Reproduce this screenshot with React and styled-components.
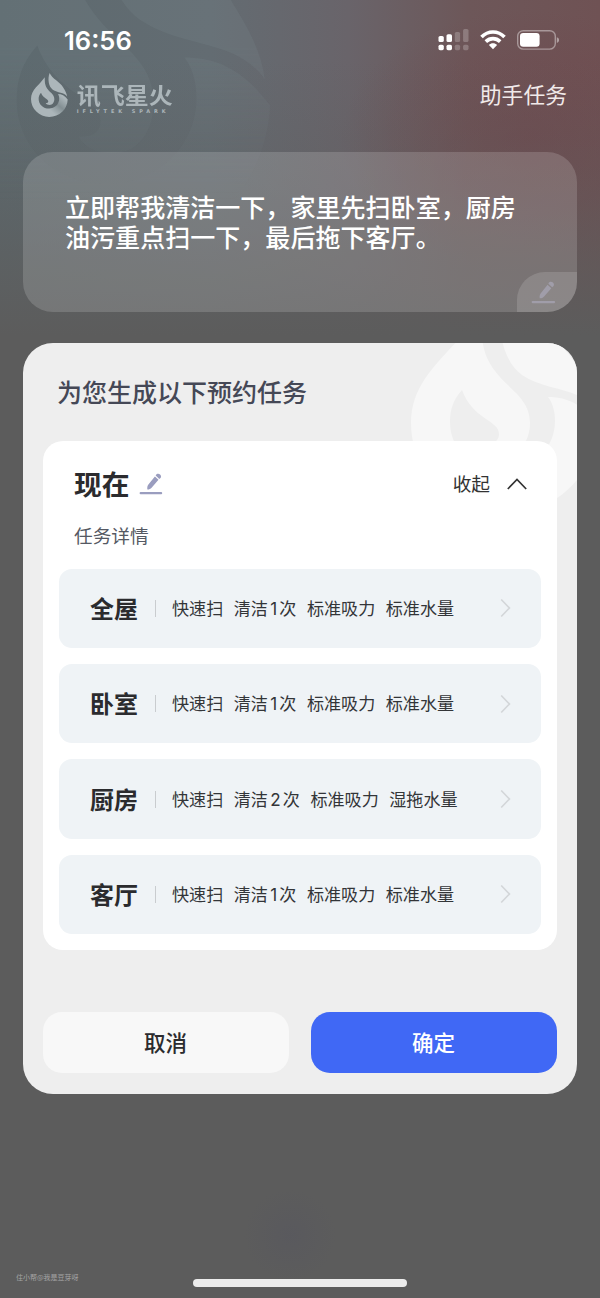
import React, { useState } from 'react'
import styled, { createGlobalStyle } from 'styled-components'

const tasks = [
	{ room: '全屋', times: 1, suction: '标准吸力', water: '标准水量' },
	{ room: '卧室', times: 1, suction: '标准吸力', water: '标准水量' },
	{ room: '厨房', times: 2, suction: '标准吸力', water: '湿拖水量' },
	{ room: '客厅', times: 1, suction: '标准吸力', water: '标准水量' },
]

function Flame({ className, shaded }) {
	return (
		<svg className={className} viewBox='0 0 187 224' fill='currentColor'>
			<defs>
				<linearGradient id='flameShade' x1='1' y1='0.3' x2='0.5' y2='1'>
					<stop offset='0' stopColor='#5a686c' stopOpacity='0' />
					<stop offset='0.5' stopColor='#5a686c' stopOpacity='0.5' />
					<stop offset='1' stopColor='#5a686c' stopOpacity='0' />
				</linearGradient>
			</defs>
			<path d='M70 22C70 52 72 65 84 81C97 99 119 108 119 133C119 150 110 163 95 163C86 163 79 160 75 153C84 154 88 150 88 144C88 130 62 130 51 100C42 110 39 120 39 132C39 160 62 181 92 181C122 181 144 158 144 131C144 120 141 112 137 107C157 107 172 115 187 135C185 184 145 224 93 224C42 224 0 183 0 133C0 85 42 63 70 22Z' />
			<path d='M95 0C108 30 148 44 165 75C175 91 182 104 184 120C168 96 136 102 111 85C90 70 83 30 95 0Z' />
			{shaded && (
				<path
					fill='url(#flameShade)'
					d='M137 107C157 107 172 115 187 135C185 184 145 224 93 224C80 210 92 190 110 178C132 168 144 150 144 131C144 120 141 112 137 107Z'
				/>
			)}
		</svg>
	)
}

function PencilIcon({ className }) {
	return (
		<svg className={className} viewBox='0 0 24 24' fill='currentColor'>
			<path d='M15.9 4.6L19.5 7.8L12.6 15.8C11.5 17.1 9.9 17.7 8.4 17.6C8 15.8 8.4 13.9 9.4 12.6Z' />
			<path d='M16.7 3.5C17.2 1.7 19.5 1.2 21.1 2.5C22.7 3.9 22.3 6 20.3 6.9Z' />
			<rect x='0.6' y='20.1' width='22.6' height='2.1' rx='1' />
		</svg>
	)
}

function StatusBar() {
	return (
		<Status>
			<Time>16:56</Time>
			<StatusIcons>
				<svg width='31' height='22' viewBox='0 0 31 22' fill='#fff'>
					<rect x='0.5' y='7' width='5.3' height='6' rx='1.6' />
					<rect x='0.5' y='15.7' width='5.3' height='5.5' rx='1.6' />
					<rect x='8.5' y='5.2' width='5.5' height='7.8' rx='1.6' />
					<rect x='8.5' y='15.7' width='5.5' height='5.5' rx='1.6' />
					<g opacity='0.22'>
						<rect x='16.8' y='3' width='5.3' height='10' rx='1.6' />
						<rect x='16.8' y='15.7' width='5.3' height='5.5' rx='1.6' />
						<rect x='25.1' y='0' width='5.4' height='13' rx='1.6' />
						<rect x='25.1' y='15.7' width='5.4' height='5.5' rx='1.6' />
					</g>
				</svg>
				<svg width='26' height='20' viewBox='0 0 26 20' fill='none' stroke='#fff' strokeWidth='3.6'>
					<path d='M1.5 7C8 0.3 18 0.3 24.5 7' />
					<path d='M5.8 11.6C10 7.6 16 7.6 20.2 11.6' />
					<path d='M8.9 15C11.2 12.7 14.8 12.7 17.1 15L13 19.3Z' fill='#fff' stroke='none' />
				</svg>
				<svg width='43' height='20' viewBox='0 0 43 20'>
					<rect x='0.7' y='0.7' width='37.6' height='18.4' rx='5.6' fill='none' stroke='#fff' strokeOpacity='0.4' strokeWidth='1.4' />
					<rect x='3' y='3' width='19.6' height='13.8' rx='3.2' fill='#fff' />
					<path d='M39.8 7.2C42.8 8 42.8 12 39.8 12.8Z' fill='#fff' fillOpacity='0.45' />
				</svg>
			</StatusIcons>
		</Status>
	)
}

function TaskRow({ room, times, suction, water }) {
	return (
		<Row>
			<Room>{room}</Room>
			<Divider />
			<Details>
				<span>快速扫</span>
				<span>
					清洁<Count>{times}</Count>次
				</span>
				<span>{suction}</span>
				<span>{water}</span>
			</Details>
			<svg width='11' height='20' viewBox='0 0 11 20' fill='none' stroke='#d3d6d9' strokeWidth='1.7'>
				<path d='M1.2 1.5L9.4 10L1.2 18.5' />
			</svg>
		</Row>
	)
}

function App() {
	const [open, setOpen] = useState(true)

	return (
		<Screen>
			<GlobalStyle />
			<BackdropFlame />
			<StatusBar />
			<Header>
				<Brand>
					<BrandFlame shaded />
					<BrandText>
						<BrandName>讯飞星火</BrandName>
						<BrandSub>IFLYTEK SPARK</BrandSub>
					</BrandText>
				</Brand>
				<HeaderLink>助手任务</HeaderLink>
			</Header>
			<Prompt>
				立即帮我清洁一下，家里先扫卧室，厨房
				<br />
				油污重点扫一下，最后拖下客厅。
				<PromptEdit>
					<PencilIcon />
				</PromptEdit>
			</Prompt>
			<Panel>
				<PanelFlame />
				<PanelTitle>为您生成以下预约任务</PanelTitle>
				<Card>
					<CardHead>
						<When>现在</When>
						<EditIcon />
						<Toggle onClick={() => setOpen(!open)}>
							{open ? '收起' : '展开'}
							<ToggleArrow $open={open} viewBox='0 0 20 12'>
								<path d='M0.8 11L10 1.5L19.2 11' />
							</ToggleArrow>
						</Toggle>
					</CardHead>
					<CardLabel>任务详情</CardLabel>
					{open && (
						<Rows>
							{tasks.map((task) => (
								<TaskRow key={task.room} {...task} />
							))}
						</Rows>
					)}
				</Card>
				<Actions>
					<ActionButton>取消</ActionButton>
					<ActionButton $primary>确定</ActionButton>
				</Actions>
			</Panel>
			<Footer>
				<Watermark>住小帮@我是豆芽呀</Watermark>
				<HomeBar />
			</Footer>
		</Screen>
	)
}

export default App

const GlobalStyle = createGlobalStyle`
	* {
		box-sizing: border-box;
	}

	body {
		margin: 0;
		background: #5c5c5c;
		font-family: 'Noto Sans CJK SC', 'Liberation Sans', sans-serif;
	}

	button {
		border: 0;
		padding: 0;
		background: none;
		font: inherit;
	}

	svg {
		display: block;
		flex: none;
	}
`

const Screen = styled.div`
	position: relative;
	display: flex;
	flex-direction: column;
	width: 600px;
	height: 1298px;
	padding: 0 23px;
	overflow: hidden;
	background:
		radial-gradient(circle at 290px 1235px, rgba(88, 88, 94, 0.7), transparent 46px),
		linear-gradient(180deg, rgba(92, 92, 92, 0) 60px, rgba(92, 92, 92, 0.35) 190px, #5c5c5c 335px),
		radial-gradient(ellipse 190px 130px at 530px 140px, rgba(110, 66, 73, 0.5), transparent),
		linear-gradient(90deg, #5d6a6f 0%, #636c72 35%, #69646a 58%, #6d5759 78%, #6f5254 100%);
`

const BackdropFlame = styled(Flame)`
	position: absolute;
	left: -50px;
	top: -126px;
	width: 320px;
	height: 384px;
	color: rgba(125, 140, 145, 0.2);
	mask-image: linear-gradient(#000 45%, transparent 85%);
`

const Status = styled.div`
	position: relative;
	display: flex;
	justify-content: space-between;
	height: 68px;
	padding: 25px 17px 0 41px;
`

const Time = styled.div`
	color: #fff;
	font-family: Inter, sans-serif;
	font-size: 25.6px;
	font-weight: 600;
	line-height: 31px;
`

const StatusIcons = styled.div`
	display: flex;
	align-items: center;
	height: 30px;
	gap: 11px;
`

const Header = styled.div`
	position: relative;
	display: flex;
	justify-content: space-between;
	height: 84px;
	padding: 5px 10px 0 8px;
`

const Brand = styled.div`
	display: flex;
	height: 44px;
	color: #acb6ba;
`

const BrandFlame = styled(Flame)`
	width: 36.7px;
	height: 44px;
`

const BrandText = styled.div`
	padding: 10px 0 0 9px;
`

const BrandName = styled.div`
	font-size: 24px;
	font-weight: 700;
	line-height: 24px;
	transform: scaleY(0.94);
`

const BrandSub = styled.div`
	width: 98px;
	margin-top: 1px;
	color: #acb6ba;
	font-family: 'DejaVu Sans', sans-serif;
	font-size: 5px;
	font-weight: 700;
	letter-spacing: 3.9px;
	line-height: 6px;
	white-space: nowrap;
`

const HeaderLink = styled.div`
	margin-top: 5px;
	color: #f1eaea;
	font-size: 21.8px;
	line-height: 32px;
`

const Prompt = styled.div`
	position: relative;
	flex: none;
	height: 160px;
	padding: 39px 42px;
	overflow: hidden;
	border-radius: 30px;
	background: rgba(255, 255, 255, 0.155);
	color: #fff;
	font-size: 25.05px;
	font-weight: 500;
	line-height: 30px;
	white-space: nowrap;
`

const PromptEdit = styled.div`
	position: absolute;
	right: 0;
	bottom: 0;
	display: flex;
	width: 60px;
	height: 40px;
	padding: 8px 0 0 14px;
	border-radius: 28px 0 0 0;
	background: rgba(255, 255, 255, 0.14);
	color: #a09da9;

	svg {
		width: 25px;
		height: 25px;
	}
`

const Panel = styled.div`
	position: relative;
	flex: none;
	height: 751px;
	margin-top: 31px;
	padding: 29px 20px 0;
	overflow: hidden;
	border-radius: 30px;
	background: #eeeeee;
`

const PanelFlame = styled(Flame)`
	position: absolute;
	left: 388px;
	top: -53px;
	width: 187px;
	height: 224px;
	color: #f7f7f7;
`

const PanelTitle = styled.div`
	position: relative;
	padding-left: 14px;
	color: #454856;
	font-size: 25px;
	font-weight: 500;
	line-height: 38px;
`

const Card = styled.div`
	position: relative;
	height: 509px;
	margin-top: 31px;
	padding: 24px 16px 0;
	border-radius: 20px;
	background: #fff;
`

const CardHead = styled.div`
	display: flex;
	align-items: center;
	height: 36px;
	padding: 0 14px 0 15px;
`

const When = styled.div`
	color: #2b2b2e;
	font-size: 27.8px;
	font-weight: 700;
	line-height: 36px;
`

const EditIcon = styled(PencilIcon)`
	width: 24px;
	height: 24px;
	margin: 2px 0 0 9px;
	color: #9a9dbf;
`

const Toggle = styled.button`
	display: flex;
	align-items: center;
	gap: 17px;
	margin-left: auto;
	color: #333;
	font-size: 18.7px;
	line-height: 28px;
`

const ToggleArrow = styled.svg`
	width: 20px;
	height: 12px;
	margin-top: 2px;
	fill: none;
	stroke: #333;
	stroke-width: 1.7;
	transform: ${(p) => (p.$open ? 'none' : 'rotate(180deg)')};
`

const CardLabel = styled.div`
	margin-top: 20px;
	padding-left: 15px;
	color: #555963;
	font-size: 18.7px;
	line-height: 28px;
`

const Rows = styled.div`
	display: grid;
	gap: 15.8px;
	margin-top: 19.5px;
`

const Row = styled.div`
	display: flex;
	align-items: center;
	height: 79.6px;
	padding: 0 30px 0 31px;
	border-radius: 13px;
	background: #eff3f6;
`

const Room = styled.div`
	margin-top: -1px;
	color: #2b2b2e;
	font-size: 24px;
	font-weight: 700;
	line-height: 36px;
`

const Divider = styled.div`
	width: 1px;
	height: 17px;
	margin: 0 16px 0 17px;
	background: #c9cccf;
`

const Details = styled.div`
	display: flex;
	flex: 1;
	gap: 10.5px;
	color: #333538;
	font-size: 17.1px;
	line-height: 26px;
	white-space: nowrap;
`

const Count = styled.span`
	margin: 0 2.2px;
	font-family: Inter, sans-serif;
`

const Actions = styled.div`
	position: relative;
	display: grid;
	grid-template-columns: 1fr 1fr;
	gap: 22px;
	margin-top: 62px;
`

const ActionButton = styled.button`
	height: 61px;
	padding: 0 1px 2px 0;
	border-radius: 19px;
	background: ${(p) => (p.$primary ? '#4068f5' : '#f8f8f8')};
	color: ${(p) => (p.$primary ? '#fff' : '#2b2b2e')};
	font-size: 21.5px;
	font-weight: 500;
`

const Footer = styled.div`
	position: relative;
	display: grid;
	grid-template-columns: 1fr 214px 1fr;
	align-items: end;
	margin: auto -23px 11px;
`

const Watermark = styled.div`
	padding: 0 0 5px 16px;
	color: #a5a5a5;
	font-size: 7px;
	line-height: 10px;
`

const HomeBar = styled.div`
	height: 8px;
	border-radius: 4px;
	background: #ececec;
`
